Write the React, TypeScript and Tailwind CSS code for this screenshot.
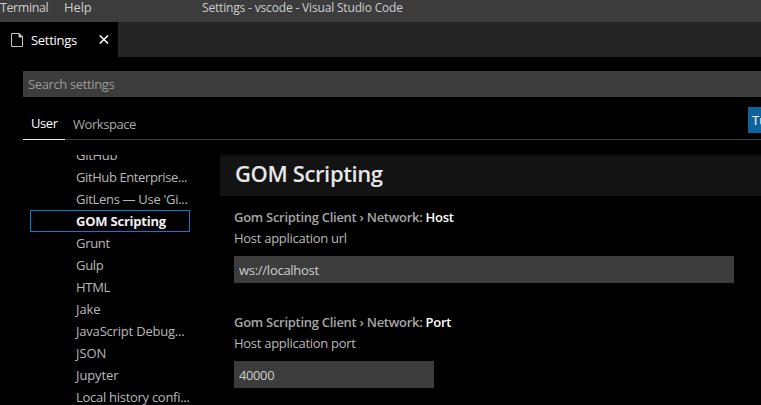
import React from "react";

type TocItem = { label: string; tracking: string; selected?: boolean };

const tocItems: TocItem[] = [
  { label: "GitHub", tracking: "tracking-[-0.3px]" },
  { label: "GitHub Enterprise...", tracking: "tracking-[-0.4px]" },
  { label: "GitLens — Use 'Gi...", tracking: "tracking-[-0.3px]" },
  { label: "GOM Scripting", tracking: "tracking-[-0.22px]", selected: true },
  { label: "Grunt", tracking: "tracking-[-0.3px]" },
  { label: "Gulp", tracking: "tracking-[-0.3px]" },
  { label: "HTML", tracking: "tracking-[-0.3px]" },
  { label: "Jake", tracking: "tracking-[-0.1px]" },
  { label: "JavaScript Debug...", tracking: "tracking-[-0.2px]" },
  { label: "JSON", tracking: "tracking-[-0.1px]" },
  { label: "Jupyter", tracking: "tracking-[-0.1px]" },
  { label: "Local history confi...", tracking: "tracking-[-0.28px]" },
];

function TitleBar() {
  return (
    <header className="flex h-[22px] shrink-0 items-start bg-[#3c3c3c] text-[#cccccc]">
      <span className="w-[64px] text-[12.5px] leading-4 tracking-[-0.42px]">Terminal</span>
      <span className="w-[138px] leading-[14px] tracking-[-0.1px]">Help</span>
      <span className="text-[12px] leading-4 tracking-[-0.17px]">
        Settings - vscode - Visual Studio Code
      </span>
    </header>
  );
}

function EditorTabs() {
  return (
    <div className="flex h-[35px] shrink-0 bg-[#252526]">
      <div className="flex w-[118px] items-center bg-black pl-[11px] text-white">
        <svg width="12" height="14" viewBox="0 0 12 14" fill="none" stroke="#c5c5c5">
          <path d="M.5.5h7.5l3.5 3.5v9.500h-11z" />
          <path d="M8 .5v3.500h3.500z" fill="#c5c5c5" />
        </svg>
        <span className="ml-2 w-[68px] leading-[36px] tracking-[-0.3px]">Settings</span>
        <svg width="10" height="9" viewBox="0 0 10 9" stroke="#ffffff" strokeWidth="1.4">
          <path d="M.7.4l8.400 8.200M9.100.4L.7 8.600" />
        </svg>
      </div>
    </div>
  );
}

type SettingProps = {
  name: string;
  description: string;
  value: string;
  wide?: boolean;
};

function Setting({ name, description, value, wide }: SettingProps) {
  return (
    <section className="h-[105px] pl-3.5">
      <div className="h-[21px] font-semibold leading-[21px] tracking-[-0.28px] text-[#a6a6a6]">
        Gom Scripting Client › Network: <span className="text-white">{name}</span>
      </div>
      <div className="h-[28px] leading-[21px] tracking-[-0.28px] text-[#b9b9b9]">{description}</div>
      <div
        className={`h-[27px] bg-[#3c3c3c] pl-[5px] leading-[28px] text-[#cccccc] ${
          wide ? "w-[500px] tracking-[-0.27px]" : "w-[200px] tracking-[-0.4px]"
        }`}
      >
        {value}
      </div>
    </section>
  );
}

export default function App() {
  return (
    <div className="flex h-[405px] w-[761px] flex-col overflow-hidden whitespace-nowrap bg-black font-['Open_Sans',sans-serif] text-[13px]">
      <TitleBar />
      <EditorTabs />
      <div className="flex h-[98px] shrink-0 flex-col pl-[23px] pt-[14px]">
        <div className="h-[26px] bg-[#3c3c3c] pl-[5px] leading-[27px] tracking-[-0.37px] text-[#989898]">
          Search settings
        </div>
        <div className="mt-[10px] flex h-[33px] border-b border-[#404040]">
          <div className="h-[33px] w-[42px] border-b border-[#e7e7e7] pl-2 leading-[33px] tracking-[-0.4px] text-white">
            User
          </div>
          <div className="pl-2 leading-[35px] tracking-[-0.45px] text-[#a9a9a9]">Workspace</div>
          <div className="ml-auto h-[26px] w-[13px] overflow-hidden bg-[#0e639c] pl-1 leading-[26px] text-white">
            Turn on Settings Sync
          </div>
        </div>
      </div>
      <main className="flex h-[250px] shrink-0">
        <nav className="h-[250px] w-[220px] overflow-hidden pl-[30px]">
          <div className="-mt-[11px]">
            {tocItems.map((item) => (
              <div
                key={item.label}
                className={`h-[22px] w-[160px] border pl-[45px] leading-[20px] ${item.tracking} ${
                  item.selected
                    ? "border-[#007fd4] font-bold text-[#f0f0f0]"
                    : "border-transparent text-[#b9b9b9]"
                }`}
              >
                {item.label}
              </div>
            ))}
          </div>
        </nav>
        <div className="-mt-px flex-1">
          <h2 className="h-[42px] bg-linear-to-b from-[#050505] to-[#131313] to-[3px] pl-[15px] text-[22px] font-semibold leading-[39px] tracking-[-0.38px] text-[#e7e7e7]">
            GOM Scripting
          </h2>
          <div className="pt-[11px]">
            <Setting name="Host" description="Host application url" value="ws://localhost" wide />
            <Setting name="Port" description="Host application port" value="40000" />
          </div>
        </div>
      </main>
    </div>
  );
}
